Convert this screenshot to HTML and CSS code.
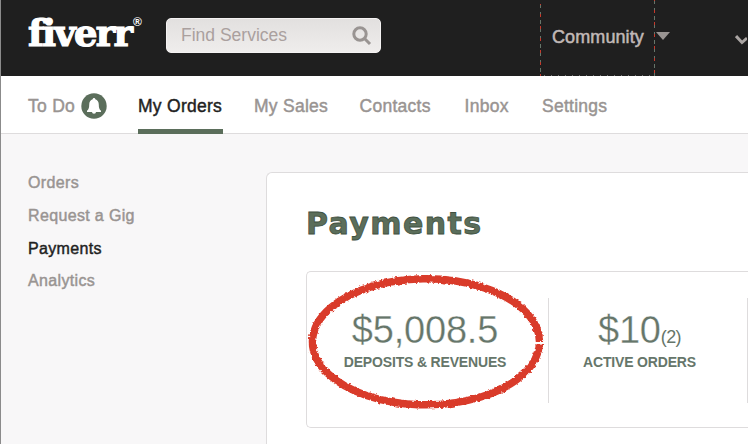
FILE: index.html
```html
<!DOCTYPE html>
<html lang="en">
<head>
<meta charset="utf-8">
<title>Payments</title>
<link rel="stylesheet" href="styles.css">
</head>
<body>
<header class="topbar">
  <div class="logo">fiverr<span class="reg">®</span></div>
  <div class="search">
    <span>Find Services</span>
    <svg class="glass" viewBox="0 0 20 20"><circle cx="8" cy="8" r="6.2"/><path d="M12.5 12.5 18 18"/></svg>
  </div>
  <div class="community">Community
    <svg class="dashes" viewBox="0 0 116 76"><path class="green" d="M.5 4V76M114.5 0V76"/><path class="red" d="M.5 4V76M114.5 0V76"/><path class="base" d="M4 75.500H115"/></svg>
  </div>
  <svg class="caret" viewBox="0 0 14 8"><path d="M0 0H14L7 8Z"/></svg>
  <svg class="check" viewBox="0 0 12 12"><path d="M1 2 7 8.500 12 4"/></svg>
</header>
<nav class="tabs">
  <a>To Do<svg class="bell" viewBox="0 0 26 26"><circle cx="13" cy="13" r="12.700"/><path d="M13 5c-.8 0-1.300.6-1.300 1.300-2.300.7-3.500 2.800-3.500 5.400 0 3-.5 4.600-2.200 6.100v1.200h14v-1.200c-1.700-1.500-2.200-3.100-2.200-6.100 0-2.600-1.200-4.700-3.500-5.400C14.300 5.600 13.800 5 13 5ZM11 19a2 1.800 0 0 0 4 0Z"/></svg></a>
  <a class="active"><span>My Orders</span></a>
  <a>My Sales</a>
  <a>Contacts</a>
  <a>Inbox</a>
  <a>Settings</a>
</nav>
<main class="body">
  <aside class="side">
    <a>Orders</a>
    <a>Request a Gig</a>
    <a class="current">Payments</a>
    <a>Analytics</a>
  </aside>
  <section class="card">
    <h1>Payments</h1>
    <div class="stats">
      <div class="stat">
        <div class="amount">$5,008.5</div>
        <div class="label">DEPOSITS &amp; REVENUES</div>
        <svg class="ring" viewBox="0 0 244 142">
          <filter id="rough" x="-5%" y="-5%" width="110%" height="110%"><feTurbulence type="fractalNoise" baseFrequency=".35" numOctaves="2" seed="4"/><feDisplacementMap in="SourceGraphic" scale="3.500" xChannelSelector="R" yChannelSelector="G"/></filter>
          <path filter="url(#rough)" d="M235.500 70A113.500 63 0 1 0 235.400 72.500"/>
        </svg>
      </div>
      <div class="stat">
        <div class="amount">$10<small>(2)</small></div>
        <div class="label">ACTIVE ORDERS</div>
      </div>
    </div>
  </section>
</main>
</body>
</html>
```
FILE: styles.css
```css
* { box-sizing: border-box; }
body {
  margin: 0;
  width: 748px;
  height: 444px;
  overflow: hidden;
  display: flex;
  flex-direction: column;
  border-left: 1px solid #8b8b8b;
  background: #f8f7f8;
  color: #999492;
  font-family: "Liberation Sans", Arial, sans-serif;
}
svg { display: block; }
.topbar {
  height: 76px;
  flex: none;
  display: flex;
  align-items: flex-start;
  background: #1f1f1f;
}
.logo {
  position: relative;
  width: 138px;
  margin: 12px 0 0 27px;
  color: #fff;
  font: bold 37px/42px "DejaVu Serif", serif;
  letter-spacing: -1.800px;
  -webkit-text-stroke: 1.200px #fff;
}
.reg {
  position: absolute;
  left: 105px;
  top: 3px;
  font: bold 12px/14px "Liberation Sans", sans-serif;
  letter-spacing: 0;
  -webkit-text-stroke: 0;
}
.search {
  width: 215px;
  height: 35px;
  margin-top: 18px;
  padding: 0 8px 0 14px;
  display: flex;
  align-items: center;
  justify-content: space-between;
  border: 1px solid #f4f2f2;
  border-radius: 5px;
  background: linear-gradient(#e2e0df, #efedec);
  color: #aaa09e;
  font-size: 17.500px;
}
.glass { width: 20px; height: 20px; fill: none; stroke: #999492; stroke-width: 3; }
.community {
  position: relative;
  width: 115px;
  height: 76px;
  margin-left: 159px;
  padding-left: 12px;
  line-height: 74px;
  font-size: 18px;
  letter-spacing: .1px;
  color: #c1b9b7;
  -webkit-text-stroke: .5px #c1b9b7;
}
.dashes { position: absolute; left: 0; top: 0; width: 116px; height: 76px; fill: none; }
.dashes .green { stroke: #66766a; stroke-dasharray: 4 4; }
.dashes .red { stroke: #c63a2c; stroke-dasharray: 3 9; stroke-dashoffset: 2; }
.dashes .base { stroke: #777; stroke-dasharray: 1 6; }
.caret { width: 14px; height: 8px; margin: 32px 0 0 1px; fill: #999492; }
.check { width: 12px; height: 12px; margin: 34px 0 0 65px; fill: none; stroke: #aaa5a3; stroke-width: 3; }
.tabs {
  height: 58px;
  flex: none;
  display: grid;
  grid-template-columns: 110px 116px 105.500px 105px 77.500px auto;
  padding-left: 27px;
  background: #fff;
  border-bottom: 1px solid #dedcdd;
  font-size: 17.500px;
  line-height: 60px;
  letter-spacing: .27px;
  -webkit-text-stroke: .45px;
}
.tabs a { display: flex; height: 58px; }
.bell { width: 26px; height: 26px; margin: 17px 0 0 6px; fill: #5b6e5b; -webkit-text-stroke: 0; }
.bell path { fill: #fff; }
.active { color: #1f1f1f; }
.active span { height: 58px; width: 84.500px; border-bottom: 5px solid #5b6e5b; white-space: nowrap; }
.body { flex: 1; display: flex; min-height: 0; }
.side {
  width: 265px;
  flex: none;
  padding: 33px 0 0 27px;
  display: flex;
  flex-direction: column;
  font-size: 16px;
  line-height: 32.800px;
  letter-spacing: .35px;
  -webkit-text-stroke: .45px;
}
.current { color: #1f1f1f; }
.card {
  flex: 1;
  min-width: 0;
  margin-top: 38px;
  padding: 30px 0 0 39px;
  background: #fff;
  border: 1px solid #dedcdd;
  border-width: 1px 0 0 1px;
  border-radius: 6px 0 0 0;
}
h1 {
  margin: 0;
  height: 68px;
  color: #5b6e5b;
  font: bold 30px/42px "DejaVu Sans", sans-serif;
  letter-spacing: 1.400px;
  -webkit-text-stroke: .8px #40503f;
}
.stats {
  height: 157px;
  padding-top: 26px;
  display: flex;
  border: 1px solid #dedcdd;
  border-width: 1px 0 1px 1px;
  border-radius: 5px 0 0 5px;
}
.stat {
  position: relative;
  flex: none;
  width: 242px;
  height: 105px;
  padding-top: 9px;
  border-right: 1px solid #dedcdd;
  text-align: center;
  color: #66766a;
}
.stat + .stat { width: 199px; padding-right: 17px; }
.stat:first-child { padding-right: 5px; }
.amount { height: 46px; font-size: 38px; line-height: 46px; letter-spacing: -.2px; -webkit-text-stroke: .3px #fff; }
.amount small { font-size: 18px; letter-spacing: -.6px; -webkit-text-stroke: 0; }
.label { font-size: 14px; line-height: 18px; font-weight: bold; letter-spacing: -.17px; white-space: nowrap; }
.ring {
  position: absolute;
  left: -3.500px;
  top: -26px;
  width: 244px;
  height: 142px;
  fill: none;
  stroke: #d93a2b;
  stroke-width: 7.500;
}
```
